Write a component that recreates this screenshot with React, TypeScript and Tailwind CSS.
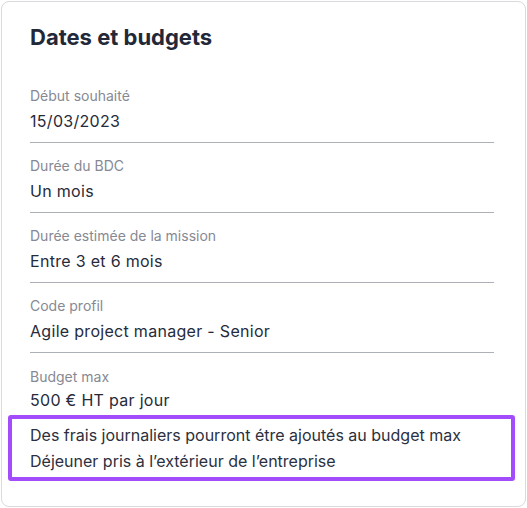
const fields = [
  { label: 'Début souhaité', value: '15/03/2023' },
  { label: 'Durée du BDC', value: 'Un mois' },
  { label: 'Durée estimée de la mission', value: 'Entre 3 et 6 mois' },
  { label: 'Code profil', value: 'Agile project manager - Senior' },
];

const notes = [
  'Des frais journaliers pourront étre ajoutés au budget max',
  'Déjeuner pris à l’extérieur de l’entreprise',
];

export default function App() {
  return (
    <div className="p-px bg-white" style={{ fontFamily: 'Inter, "Noto Sans", sans-serif' }}>
      <div className="w-[525px] h-[506px] rounded-lg border border-[#d9dadd] bg-white pt-[21px] pl-[28px] pr-[31px]">
        <h2 className="text-[22px] leading-[28px] font-bold text-[#232838]">Dates et budgets</h2>

        <div className="mt-[35px]">
          {fields.map((f, i) => (
            <div key={f.label} className={i === 0 ? 'pb-[9px] border-b border-[#aeb0b7]' : 'pt-[13px] pb-[9px] border-b border-[#aeb0b7]'}>
              <div className="text-[14px] leading-[20px] text-[#868993]">{f.label}</div>
              <div className="mt-[3px] text-[16px] leading-[24px] tracking-[0.3px] text-[#262b3b]">{f.value}</div>
            </div>
          ))}

          {/* Budget row, with the highlighted notes underneath */}
          <div className="pt-[14px]">
            <div className="text-[14px] leading-[20px] text-[#868993]">Budget max</div>
            <div className="mt-[1px] text-[16px] leading-[24px] tracking-[0.3px] text-[#262b3b]">500 € HT par jour</div>
          </div>
          <div className="mt-[3px] -ml-[22px] -mr-[21px] rounded-[3px] border-4 border-[#a24cfc] py-[3px] px-[18px]">
            {notes.map(n => (
              <div key={n} className="text-[16px] leading-[26px] text-[#2b3040]">{n}</div>
            ))}
          </div>
        </div>
      </div>
    </div>
  );
}
